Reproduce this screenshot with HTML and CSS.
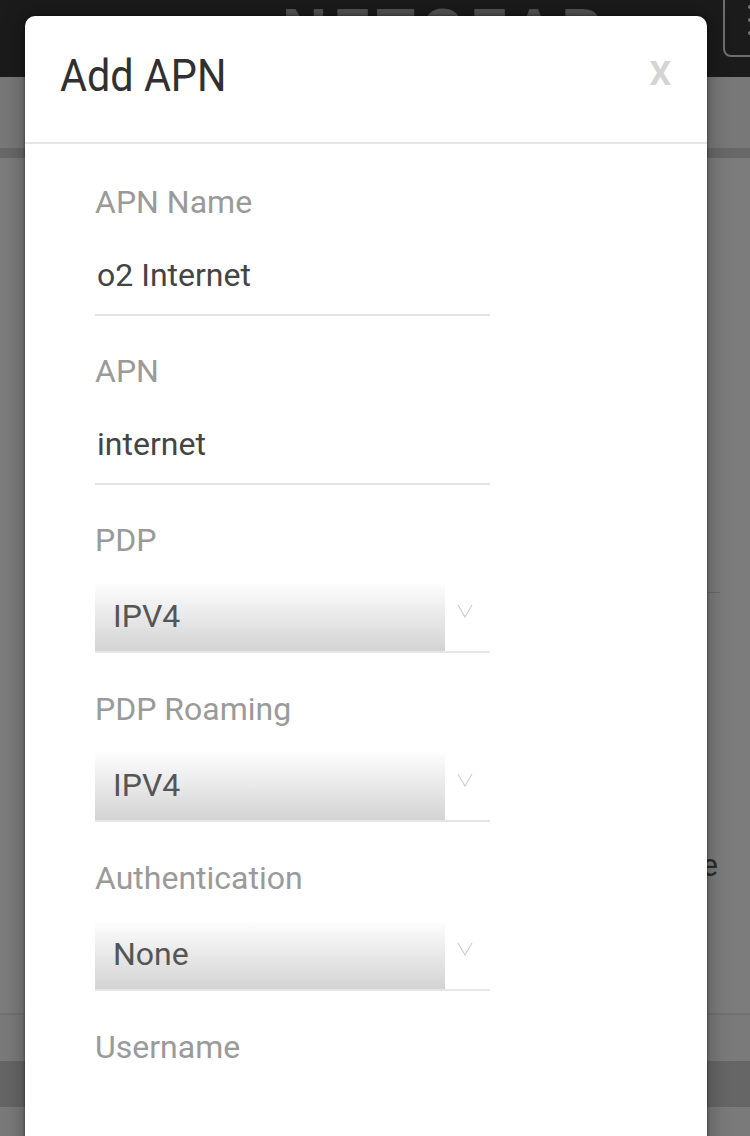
FILE: index.html
```html
<!DOCTYPE html>
<html lang="en">
<head>
  <meta charset="UTF-8" />
  <meta name="viewport" content="width=device-width, initial-scale=1" />
  <title>Add APN</title>
  <link rel="stylesheet" href="styles.css">
</head>
<body>
  <div class="page">
    <header class="topbar">
      <div class="logo">NETGEAR</div>
      <div class="menu-btn">
        <span class="dot"></span>
        <span class="dot"></span>
        <span class="dot"></span>
      </div>
    </header>
    <div class="content">
      <div class="strip strip-a"></div>
      <div class="strip strip-b"></div>
      <div class="strip strip-c"><span class="sep"></span></div>
      <div class="strip strip-d"><span class="bg-text">Profile</span></div>
      <div class="strip strip-e"></div>
      <div class="strip strip-f"></div>
      <div class="strip strip-g"></div>
    </div>
  </div>

  <div class="modal">
    <div class="modal-head">
      <h2>Add APN</h2>
      <span class="close">X</span>
    </div>

    <form class="modal-body" id="apnForm">
      <div class="field">
        <label for="apnName">APN Name</label>
        <input type="text" id="apnName" name="apnName" value="o2 Internet" />
      </div>

      <div class="field">
        <label for="apn">APN</label>
        <input type="text" id="apn" name="apn" value="internet" />
      </div>

      <div class="field select-field">
        <label for="pdp">PDP</label>
        <div class="select-wrap">
          <select id="pdp" name="pdp">
            <option>IPV4</option>
            <option>IPV6</option>
            <option>IPV4V6</option>
          </select>
          <span class="arrow"><svg width="16" height="14" viewBox="0 0 16 14"><path d="M1 1 L8 13 L15 1" fill="none" stroke="#cfcfcf" stroke-width="1.2"/></svg></span>
        </div>
      </div>

      <div class="field select-field">
        <label for="pdpRoaming">PDP Roaming</label>
        <div class="select-wrap">
          <select id="pdpRoaming" name="pdpRoaming">
            <option>IPV4</option>
            <option>IPV6</option>
            <option>IPV4V6</option>
          </select>
          <span class="arrow"><svg width="16" height="14" viewBox="0 0 16 14"><path d="M1 1 L8 13 L15 1" fill="none" stroke="#cfcfcf" stroke-width="1.2"/></svg></span>
        </div>
      </div>

      <div class="field select-field">
        <label for="auth">Authentication</label>
        <div class="select-wrap">
          <select id="auth" name="auth">
            <option>None</option>
            <option>PAP</option>
            <option>CHAP</option>
          </select>
          <span class="arrow"><svg width="16" height="14" viewBox="0 0 16 14"><path d="M1 1 L8 13 L15 1" fill="none" stroke="#cfcfcf" stroke-width="1.2"/></svg></span>
        </div>
      </div>

      <div class="field">
        <label for="username">Username</label>
        <input type="text" id="username" name="username" value="" />
      </div>
    </form>
  </div>
</body>
</html>
```

FILE: styles.css
```css
body {
  margin: 0;
  width: 750px;
  height: 1136px;
  overflow: hidden;
  font-family: Roboto, "Noto Sans", sans-serif;
  background: #7a7a7a;
}

/* page behind the dialog, already dimmed */
.page {
  width: 750px;
}
.topbar {
  height: 77px;
  background: #1b1b1b;
  display: flex;
  overflow: hidden;
}
.logo {
  margin-left: 282px;
  margin-top: 2px;
  font-size: 64px;
  font-weight: bold;
  letter-spacing: 6px;
  line-height: 1;
  color: #555;
}
.menu-btn {
  margin-left: auto;
  margin-top: -10px;
  width: 40px;
  height: 67px;
  margin-right: -13px;
  border: 2px solid #6e6e6e;
  border-radius: 8px;
  display: flex;
  flex-direction: column;
  align-items: flex-end;
  gap: 9px;
  padding: 13px 0 0;
  box-sizing: border-box;
}
.menu-btn .dot {
  width: 4px;
  height: 4px;
  border-radius: 50%;
  background: #777;
  margin-right: 9px;
}
.strip {
  position: relative;
}
.strip-a { height: 71px; background: #787878; }
.strip-b { height: 10px; background: #686868; }
.strip-c { height: 435px; background: #7c7c7c; }
.strip-c .sep {
  position: absolute;
  left: 700px;
  top: 434px;
  width: 20px;
  height: 2px;
  background: #6a6a6a;
}
.strip-d {
  height: 420px;
  background: #7c7c7c;
  border-bottom: 2px solid #717171;
  text-align: right;
}
.bg-text {
  display: inline-block;
  margin-top: 254px;
  margin-right: 32px;
  font-size: 31px;
  color: #2c2c2c;
}
.strip-e { height: 46px; background: #7a7a7a; }
.strip-f { height: 46px; background: #666; }
.strip-g { height: 60px; background: #7a7a7a; }

/* dialog */
.modal {
  position: absolute;
  left: 25px;
  top: 16px;
  width: 682px;
  height: 1200px;
  background: white;
  border-radius: 10px;
  box-shadow: 0 0 3px rgba(0,0,0,0.5), 0 0 22px rgba(0,0,0,0.35);
}
.modal-head {
  display: flex;
  justify-content: space-between;
  align-items: flex-start;
  padding: 34px 36px 40px 35px;
  border-bottom: 2px solid #e6e6e6;
}
.modal-head h2 {
  margin: 0;
  font-size: 44px;
  font-weight: normal;
  line-height: 52px;
  color: #303030;
  transform: scaleX(0.94);
  transform-origin: left;
}
.close {
  font-size: 34px;
  font-weight: bold;
  line-height: 46px;
  color: #d4d4d4;
  cursor: pointer;
}
.modal-body {
  padding: 38px 0 0 70px;
}
.field {
  width: 395px;
  margin-bottom: 35px;
}
.field label {
  display: block;
  font-size: 32px;
  line-height: 40px;
  color: #9a9a9a;
}
.field input[type="text"] {
  display: block;
  width: 100%;
  box-sizing: border-box;
  margin-top: 14px;
  height: 80px;
  padding: 0 0 0 2px;
  border: none;
  border-bottom: 2px solid #e3e3e3;
  font-family: inherit;
  font-size: 32px;
  color: #444;
  outline: none;
}
.select-field {
  margin-bottom: 36px;
}
.select-wrap {
  display: flex;
  margin-top: 24px;
  border-bottom: 2px solid #e6e6e6;
}
.select-wrap select {
  -webkit-appearance: none;
  appearance: none;
  width: 350px;
  height: 67px;
  border: none;
  border-radius: 0;
  padding: 0 0 4px 18px;
  background: linear-gradient(#fdfdfd, #d3d3d3);
  font-family: inherit;
  font-size: 32px;
  color: #555;
  outline: none;
}
.arrow {
  display: block;
  margin: 20px 0 0 12px;
  line-height: 0;
}
```
